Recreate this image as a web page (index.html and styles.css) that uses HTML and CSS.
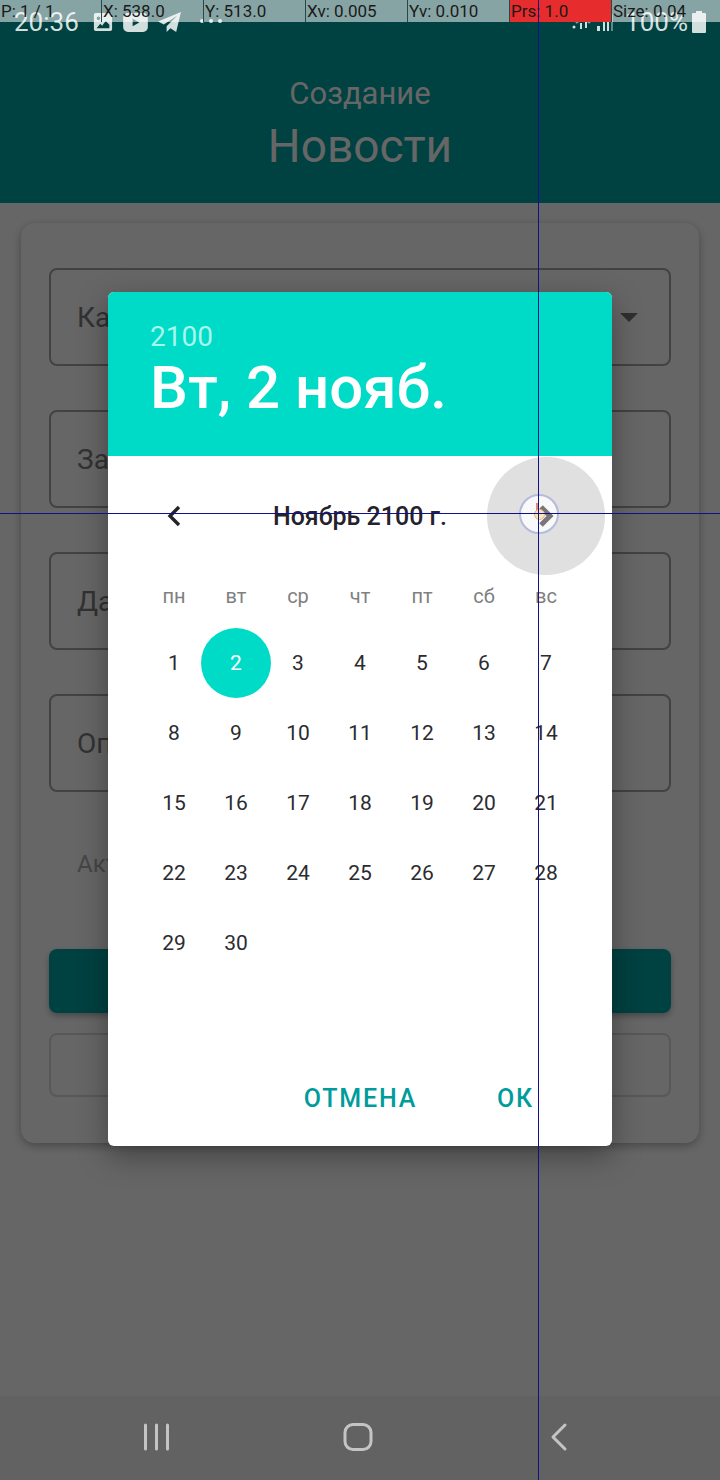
FILE: index.html
```html
<!DOCTYPE html>
<html lang="ru">
<head>
<meta charset="utf-8">
<title>Создание новости</title>
<link rel="stylesheet" href="styles.css">
</head>
<body>
<div class="screen">
  <header class="appbar">
    <div class="appbar-sub">Создание</div>
    <div class="appbar-title">Новости</div>
  </header>
  <main class="content">
    <section class="card">
      <div class="field field-select"><span>Категория</span><i class="caret"></i></div>
      <div class="field"><span>Заголовок</span></div>
      <div class="field"><span>Дата</span></div>
      <div class="field"><span>Описание</span></div>
      <div class="check-label">Активно</div>
      <div class="btn-primary"></div>
      <div class="btn-outline"></div>
    </section>
  </main>
  <nav class="navbar">
    <svg class="nav-icon" width="28" height="28" viewBox="0 0 28 28"><path d="M2.5 2v24M13.5 2v24M24.5 2v24" /></svg>
    <svg class="nav-icon nav-home" width="30" height="30" viewBox="0 0 30 30"><rect x="2" y="2.5" width="26" height="25" rx="8"/></svg>
    <svg class="nav-icon" width="20" height="30" viewBox="0 0 20 30"><path d="M16 3 4 15l12 12"/></svg>
  </nav>

  <div class="scrim"></div>

  <div class="statusbar">
    <span class="time">20:36</span>
    <svg class="st-ico" width="20" height="20" viewBox="0 0 22 22"><path fill-rule="evenodd" d="M3 1h16a2 2 0 0 1 2 2v16a2 2 0 0 1-2 2H3a2 2 0 0 1-2-2V3a2 2 0 0 1 2-2Zm3 4a2 2 0 1 0 0 4 2 2 0 0 0 0-4Zm-2 13h14v-4l-4-4-4 5-2-2Z"/></svg>
    <svg class="st-ico" width="25" height="19" viewBox="0 0 26 20"><path fill-rule="evenodd" d="M5 0h16a5 5 0 0 1 5 5v10a5 5 0 0 1-5 5H5a5 5 0 0 1-5-5V5a5 5 0 0 1 5-5Zm5 6v8l7-4Z"/></svg>
    <svg class="st-ico" width="23" height="21" viewBox="0 0 24 22"><path d="M24 0 0 10l6 3L20 4 9 15v6l4-4 6 4Z"/></svg>
    <span class="dots"><i></i><i></i><i></i></span>
    <span class="st-spacer"></span>
    <svg class="st-ico st-wifi" width="24" height="20" viewBox="0 0 24 20"><path fill="none" stroke="#d3dfdd" stroke-width="2" opacity=".6" d="M1 7c6-7 16-7 22 0M5 11c4-4 10-4 14 0"/><circle cx="3" cy="15" r="1.5"/><path d="M9 11h2v6H9zM14 10h2v6h-2z"/></svg>
    <svg class="st-ico st-bars" width="20" height="18" viewBox="0 0 20 18"><path d="M1 13h3v5H1zM7 9h2v9H7zM11 5h2v13h-2z"/><path opacity=".45" d="M15 1h2v17h-2z"/></svg>
    <span class="battery-text">100%</span>
    <svg class="st-ico st-batt" width="14" height="22" viewBox="0 0 14 22"><path d="M4 0h6v2h3a1 1 0 0 1 1 1v18a1 1 0 0 1-1 1H1a1 1 0 0 1-1-1V3a1 1 0 0 1 1-1h3Z"/></svg>
  </div>

  <div class="dialog">
    <div class="dlg-head">
      <div class="dlg-year">2100</div>
      <div class="dlg-date">Вт, 2 нояб.</div>
    </div>
    <div class="dlg-body">
      <div class="month-row">
        <svg class="chev" width="16" height="22" viewBox="0 0 16 22"><path d="M13 2 4 11l9 9"/></svg>
        <span class="month-name">Ноябрь 2100 г.</span>
        <span class="next-btn">
          <svg class="chev chev-next" width="16" height="22" viewBox="0 0 16 22"><path d="m3 2 9 9-9 9"/></svg>
        </span>
      </div>
      <div class="week">
        <span>пн</span><span>вт</span><span>ср</span><span>чт</span><span>пт</span><span>сб</span><span>вс</span>
      </div>
      <div class="days">
        <span>1</span><span class="sel">2</span><span>3</span><span>4</span><span>5</span><span>6</span><span>7</span>
        <span>8</span><span>9</span><span>10</span><span>11</span><span>12</span><span>13</span><span>14</span>
        <span>15</span><span>16</span><span>17</span><span>18</span><span>19</span><span>20</span><span>21</span>
        <span>22</span><span>23</span><span>24</span><span>25</span><span>26</span><span>27</span><span>28</span>
        <span>29</span><span>30</span>
      </div>
    </div>
    <div class="dlg-actions">
      <span>ОТМЕНА</span>
      <span>ОК</span>
    </div>
  </div>

  <div class="pointer-strip">
    <span>P: 1 / 1</span><span>X: 538.0</span><span>Y: 513.0</span><span>Xv: 0.005</span><span>Yv: 0.010</span><span class="prs">Prs: 1.0</span><span>Size: 0.04</span>
  </div>
  <div class="touch-ring"><b></b><i></i></div>
  <div class="cross-h"></div>
  <div class="cross-v"></div>
</div>
</body>
</html>
```
FILE: styles.css
```css
* { box-sizing: border-box; }
html, body { margin: 0; padding: 0; }
body { font-family: Roboto, "Noto Sans", sans-serif; background: #fff; }

.screen {
  position: relative;
  width: 720px;
  height: 1480px;
  overflow: hidden;
  display: flex;
  flex-direction: column;
  background: #fff;
}

/* page under the dialog */
.appbar {
  height: 203px;
  flex: none;
  background: #00a3a3;
  color: #fff;
  display: flex;
  flex-direction: column;
  align-items: center;
  padding-top: 75px;
}
.appbar-sub { font-size: 31px; line-height: 38px; }
.appbar-title { font-size: 46px; line-height: 54px; margin-top: 6px; }

.content { flex: 1; padding: 20px 21px 0; }
.card {
  height: 920px;
  background: #fff;
  border-radius: 14px;
  box-shadow: 0 3px 10px rgba(0, 0, 0, .3);
  padding: 45px 28px 0;
  display: flex;
  flex-direction: column;
}
.field {
  height: 98px;
  flex: none;
  margin-bottom: 44px;
  border: 2px solid #a6a6a6;
  border-radius: 8px;
  display: flex;
  align-items: center;
  justify-content: space-between;
  padding: 0 31px 0 26px;
  font-size: 28px;
  color: #7d7d7d;
}
.field:nth-child(4) { margin-bottom: 0; }
.caret {
  width: 0;
  height: 0;
  border-left: 9px solid transparent;
  border-right: 9px solid transparent;
  border-top: 9px solid #777;
}
.check-label {
  height: 157px;
  flex: none;
  padding: 57px 0 0 28px;
  font-size: 24px;
  line-height: 30px;
  color: #b0b0b0;
}
.btn-primary {
  height: 64px;
  flex: none;
  background: #00a3a3;
  border-radius: 8px;
  box-shadow: 0 3px 6px rgba(0, 0, 0, .3);
}
.btn-outline {
  height: 64px;
  flex: none;
  margin-top: 20px;
  border: 2px solid #dcdcdc;
  border-radius: 8px;
}

.navbar {
  height: 84px;
  flex: none;
  position: relative;
  z-index: 2;
  background: #626262;
  display: flex;
  align-items: center;
  justify-content: space-between;
  padding: 0 151px 2px 143px;
}
.nav-icon { fill: none; stroke: #c4c4c4; stroke-width: 3; stroke-linecap: round; stroke-linejoin: round; }
.nav-home { margin-right: 5px; }

.scrim { position: absolute; inset: 0; background: rgba(0, 0, 0, .6); }

.statusbar {
  position: absolute;
  top: 0;
  left: 0;
  width: 720px;
  height: 44px;
  display: flex;
  align-items: center;
  padding: 0 14px;
  color: #d3dfdd;
}
.time { font-size: 26px; width: 79px; }
.st-ico { fill: #d3dfdd; flex: none; margin-right: 10px; }
.dots { display: flex; gap: 5px; margin: 0 0 2px 9px; }
.dots i { width: 4px; height: 4px; border-radius: 50%; background: #d3dfdd; }
.st-spacer { flex: 1; }
.st-wifi { margin-right: 1px; }
.st-bars { margin-right: 0; }
.battery-text { font-size: 26px; margin: 0 4px 0 9px; }
.st-batt { margin-right: 0; }

/* dialog */
.dialog {
  position: absolute;
  left: 108px;
  top: 292px;
  width: 504px;
  height: 854px;
  background: #fff;
  border-radius: 6px;
  box-shadow: 0 10px 30px rgba(0, 0, 0, .35);
  display: flex;
  flex-direction: column;
  overflow: hidden;
}
.dlg-head {
  height: 164px;
  flex: none;
  background: #00dbc8;
  color: #fff;
  padding: 28px 42px 0;
}
.dlg-year { font-size: 28px; line-height: 34px; color: #a6f6ec; }
.dlg-date { font-size: 60px; line-height: 62px; font-weight: 500; margin-top: 3px; }
.dlg-body { flex: 1; padding: 0 35px; }
.month-row {
  height: 120px;
  position: relative;
  display: flex;
  align-items: center;
  justify-content: center;
}
.month-name { font-size: 25px; font-weight: 500; color: #24222c; }
.chev { fill: none; stroke: #24222c; stroke-width: 3.4; }
.month-row > .chev { position: absolute; left: 23px; top: 49px; }
.next-btn {
  position: absolute;
  right: -28px;
  top: 1px;
  width: 118px;
  height: 118px;
  border-radius: 50%;
  background: #e0e0e0;
  display: flex;
  align-items: center;
  justify-content: center;
}
.chev-next { stroke: #77777b; stroke-width: 5; position: relative; z-index: 5; }
.week, .days {
  display: grid;
  grid-template-columns: repeat(7, 62px);
  justify-items: center;
}
.week {
  height: 52px;
  padding-bottom: 13px;
  align-items: center;
  font-size: 20px;
  color: #808080;
}
.days { grid-auto-rows: 70px; font-size: 21px; color: #2b2b30; }
.days span {
  width: 70px;
  height: 70px;
  border-radius: 50%;
  display: flex;
  align-items: center;
  justify-content: center;
}
.days .sel { background: #00dbc8; color: #fff; }
.dlg-actions {
  height: 96px;
  flex: none;
  display: flex;
  justify-content: flex-end;
  align-items: center;
  gap: 80px;
  padding: 0 78px 0 0;
  font-size: 25px;
  font-weight: 500;
  letter-spacing: 1.8px;
  color: #009c9c;
}

/* pointer location overlay */
.pointer-strip {
  position: absolute;
  top: 0;
  left: 0;
  width: 720px;
  height: 22px;
  background: rgba(255, 255, 255, .525);
  display: grid;
  grid-template-columns: repeat(6, 102px) 108px;
  font-size: 17px;
  line-height: 22px;
  color: #1a1a1a;
}
.pointer-strip span { padding-left: 1px; border-right: 1px solid #26484a; white-space: nowrap; overflow: hidden; }
.pointer-strip span:last-child { border-right: 0; }
.pointer-strip .prs { background: #e62c2c; }
.cross-h { position: absolute; z-index: 6; left: 0; top: 513px; width: 720px; height: 1px; background: #10108c; }
.cross-v { position: absolute; z-index: 6; left: 538px; top: 0; width: 1px; height: 1480px; background: #10108c; }
.touch-ring {
  position: absolute;
  left: 519px;
  top: 494px;
  width: 40px;
  height: 40px;
  border-radius: 50%;
  border: 2px solid #b4bbdc;
  background: rgba(255, 255, 255, .8);
  display: flex;
  align-items: center;
  justify-content: center;
}
.touch-ring i {
  position: relative;
  z-index: 6;
  width: 11px;
  height: 11px;
  border-radius: 50%;
  border: 1.5px solid #f0b070;
  background: #f8e6c0;
}
.touch-ring b {
  position: absolute;
  z-index: 6;
  left: 15px;
  top: 7px;
  width: 2px;
  height: 9px;
  background: #e88a78;
}
```
